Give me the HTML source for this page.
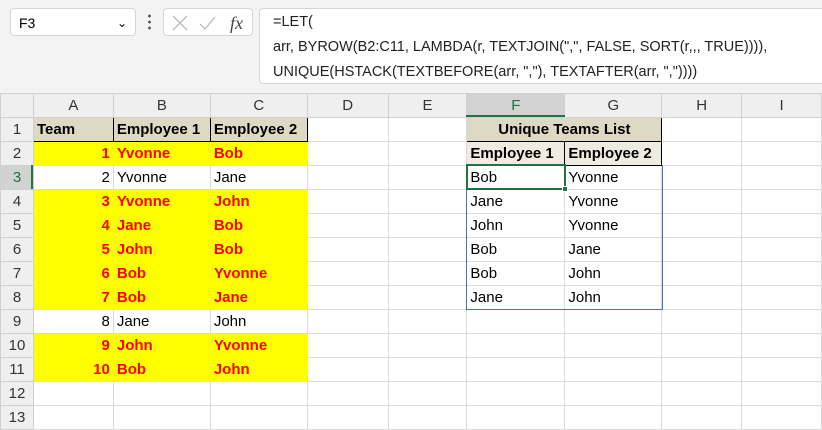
<!DOCTYPE html><html><head><style>
body{margin:0;width:822px;height:429px;overflow:hidden;background:#fff;font-family:"Liberation Sans",sans-serif;position:relative}
.top{position:absolute;left:0;top:0;width:822px;height:93px;background:#f3f3f3}
.nb{position:absolute;left:10px;top:8px;width:126px;height:28px;background:#fff;border:1px solid #d6d6d6;border-radius:4px;font-size:14px;line-height:28px;padding-left:8px;box-sizing:border-box}
.fxb{position:absolute;left:163px;top:8px;width:90px;height:28px;background:#fff;border:1px solid #d6d6d6;border-radius:4px;box-sizing:border-box}
.fb{position:absolute;left:259px;top:8px;width:570px;height:76px;background:#fff;border:1px solid #d6d6d6;border-radius:4px;box-sizing:border-box;font-size:14.5px;line-height:25px;padding:1px 0 0 13px;color:#222}
table{position:absolute;left:0;top:93px;border-collapse:collapse;table-layout:fixed}
tr{height:24px}
td{height:23px;padding:1px 3px 0;border:1px solid #dadada;font-size:15px;white-space:nowrap;overflow:hidden;line-height:22px;box-sizing:border-box}
tr.h td{background:#efefef;text-align:center;color:#333;border-color:#d0d0d0}
td.r{background:#efefef;text-align:center;color:#333;border-color:#d0d0d0}
.y td.c{background:#ff0;color:#f00;font-weight:bold;border-color:#ff0}
.num{text-align:right}
.hd{background:#ddd9c4;font-weight:bold;border:1px solid #000!important}
.h2{background:#eeece1;font-weight:bold;border:1px solid #000!important}
.ov{position:absolute;box-sizing:border-box}
</style></head><body>
<div class="top"></div>
<div class="nb">F3<span style="position:absolute;right:8px;top:0;font-size:12px">&#8964;</span></div>
<div style="position:absolute;left:148px;top:13px;width:3px;height:18px;background:radial-gradient(circle,#555 1.3px,transparent 1.5px) 0 0/3px 6px"></div>
<div class="fxb"><svg width="90" height="28" style="position:absolute;left:0;top:0"><path d="M9 7l14 14M23 7L9 21" stroke="#bbb" stroke-width="1.3" fill="none"/><path d="M36 15l5 5 10-12" stroke="#bbb" stroke-width="1.3" fill="none"/><text x="66" y="20" font-family="Liberation Serif" font-style="italic" font-size="18" fill="#444">fx</text></svg></div>
<div class="fb">=LET(<br>arr, BYROW(B2:C11, LAMBDA(r, TEXTJOIN(",", FALSE, SORT(r,,, TRUE)))),<br>UNIQUE(HSTACK(TEXTBEFORE(arr, ","), TEXTAFTER(arr, ","))))</div>
<table>
<colgroup><col style="width:33px"><col style="width:80px"><col style="width:97px"><col style="width:97px"><col style="width:81px"><col style="width:79px"><col style="width:98px"><col style="width:97px"><col style="width:80px"><col style="width:80px"></colgroup>
<tr class="h"><td></td><td>A</td><td>B</td><td>C</td><td>D</td><td>E</td><td style="background:#d2d2d2;color:#1e6e43">F</td><td>G</td><td>H</td><td>I</td></tr>
<tr><td class="r">1</td><td class="hd">Team</td><td class="hd">Employee 1</td><td class="hd">Employee 2</td><td></td><td></td><td colspan="2" class="hd" style="text-align:center">Unique Teams List</td><td></td><td></td></tr>
<tr class="y"><td class="r">2</td><td class="c num">1</td><td class="c">Yvonne</td><td class="c">Bob</td><td></td><td></td><td class="h2">Employee 1</td><td class="h2">Employee 2</td><td></td><td></td></tr>
<tr><td class="r" style="background:#d2d2d2;color:#1e6e43">3</td><td class="num">2</td><td>Yvonne</td><td>Jane</td><td></td><td></td><td>Bob</td><td>Yvonne</td><td></td><td></td></tr>
<tr class="y"><td class="r">4</td><td class="c num">3</td><td class="c">Yvonne</td><td class="c">John</td><td></td><td></td><td>Jane</td><td>Yvonne</td><td></td><td></td></tr>
<tr class="y"><td class="r">5</td><td class="c num">4</td><td class="c">Jane</td><td class="c">Bob</td><td></td><td></td><td>John</td><td>Yvonne</td><td></td><td></td></tr>
<tr class="y"><td class="r">6</td><td class="c num">5</td><td class="c">John</td><td class="c">Bob</td><td></td><td></td><td>Bob</td><td>Jane</td><td></td><td></td></tr>
<tr class="y"><td class="r">7</td><td class="c num">6</td><td class="c">Bob</td><td class="c">Yvonne</td><td></td><td></td><td>Bob</td><td>John</td><td></td><td></td></tr>
<tr class="y"><td class="r">8</td><td class="c num">7</td><td class="c">Bob</td><td class="c">Jane</td><td></td><td></td><td>Jane</td><td>John</td><td></td><td></td></tr>
<tr><td class="r">9</td><td class="num">8</td><td>Jane</td><td>John</td><td></td><td></td><td></td><td></td><td></td><td></td></tr>
<tr class="y"><td class="r">10</td><td class="c num">9</td><td class="c">John</td><td class="c">Yvonne</td><td></td><td></td><td></td><td></td><td></td><td></td></tr>
<tr class="y"><td class="r">11</td><td class="c num">10</td><td class="c">Bob</td><td class="c">John</td><td></td><td></td><td></td><td></td><td></td><td></td></tr>
<tr><td class="r">12</td><td></td><td></td><td></td><td></td><td></td><td></td><td></td><td></td><td></td></tr>
<tr><td class="r">13</td><td></td><td></td><td></td><td></td><td></td><td></td><td></td><td></td><td></td></tr>
</table>
<div class="ov" style="left:466px;top:165px;width:197px;height:145px;border:1px solid #4472c4;border-top:none"></div>
<div class="ov" style="left:466px;top:115px;width:99px;height:2px;background:#217346"></div>
<div class="ov" style="left:31px;top:165px;width:2px;height:24px;background:#217346"></div>
<div class="ov" style="left:466px;top:164px;width:100px;height:26px;border:2px solid #217346"></div>
<div class="ov" style="left:562px;top:186px;width:6px;height:6px;background:#217346;border:1px solid #fff"></div>
</body></html>
